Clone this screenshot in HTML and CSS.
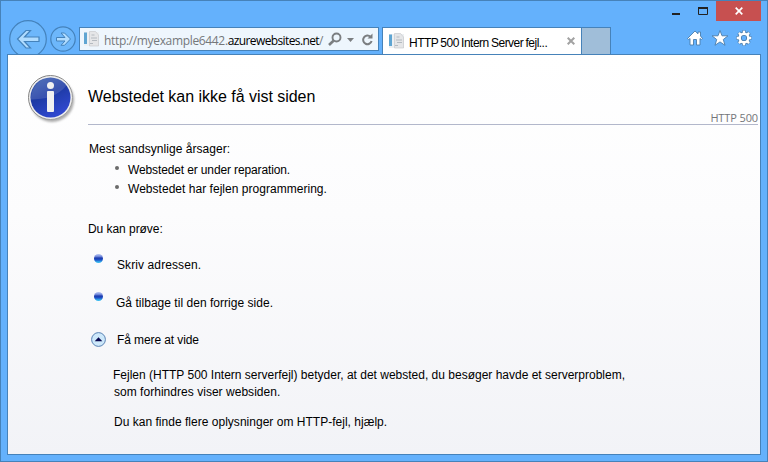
FILE: index.html
```
<!DOCTYPE html>
<html lang="da">
<head>
<meta charset="utf-8">
<title>HTTP 500 Intern Server fejl</title>
<link rel="stylesheet" href="styles.css">
</head>
<body>
<div class="window">
  <header class="chrome">
    <div class="nav">
      <svg width="38" height="34" viewBox="0 0 38 34"><circle cx="19" cy="19" r="18.3" fill="#6db7fb" stroke="#4482bb" stroke-width="1.2"/><path d="M8.500 19 17 10.500H21.500L15.500 17H30v4.500H15.500L21.500 28H17Z" fill="#b0dcff" stroke="#4482bb" stroke-width="1.2"/></svg>
      <svg class="forward" width="26" height="26" viewBox="0 0 26 26"><circle cx="13" cy="13" r="12.200" fill="#6db7fb" stroke="#4482bb" stroke-width="1.200"/><path d="M20.500 13 14.500 7H11L15 11.500H6.500v3.500H15L11 19.300h3.500Z" fill="#b0dcff" stroke="#4482bb"/></svg>
    </div>
    <div class="address">
      <svg class="page-icon" width="16" height="16" viewBox="0 0 16 16"><path d="M0 1h15v14H0Z" fill="#edf0f3"/><path d="M0 1.500h3v11.500H0Z" fill="#5fa5d2"/><path d="M5.500 .5h6l3 3.500v11h-9Z" fill="#e5e6e8" stroke="#c8cacd" stroke-width=".7"/><path d="M7.500 4h3M7 7h6M8 9.500h5M6 12.500h3" stroke="#b4bac0"/></svg>
      <span class="url">http://myexample6442.<b>azurewebsites.net</b>/</span>
      <svg class="tools" width="48" height="16" viewBox="0 0 48 16" fill="none" stroke="#7b7e81"><circle cx="8.500" cy="5.500" r="4" stroke-width="1.900"/><path d="m5.500 8.800-4.500 4.200" stroke-width="2.600"/><path d="M19 6h7l-3.500 4Z" fill="#7b7e81" stroke="none"/><path d="M42.500 4.800A4.300 4.300 0 1 0 43.600 9" stroke-width="2"/><path d="M44.500 1.500v5H39.500Z" fill="#7b7e81" stroke="none"/></svg>
    </div>
    <div class="tab">
      <svg class="page-icon" width="16" height="16" viewBox="0 0 16 16"><path d="M0 1h15v14H0Z" fill="#edf0f3"/><path d="M0 1.500h3v11.500H0Z" fill="#5fa5d2"/><path d="M5.500 .5h6l3 3.500v11h-9Z" fill="#e5e6e8" stroke="#c8cacd" stroke-width=".7"/><path d="M7.500 4h3M7 7h6M8 9.500h5M6 12.500h3" stroke="#b4bac0"/></svg>
      <span class="tab-title">HTTP 500 Intern Server fejl...</span>
      <svg class="tab-close" width="8" height="8" viewBox="0 0 8 8"><path d="m.7.7 6.600 6.600m0-6.600L.7 7.300" stroke="#a2a2a2" stroke-width="2"/></svg>
    </div>
    <div class="new-tab"></div>
    <div class="corner">
      <div class="controls">
        <svg width="44" height="20" viewBox="0 0 44 20"><path d="M0 12h8v2H0Z" fill="#222"/><path d="M26.500 6.500h9v7h-9Z" fill="none" stroke="#222"/><path d="M26 6h10v2H26Z" fill="#222"/></svg>
        <div class="close"><svg width="8" height="8" viewBox="0 0 8 8"><path d="m.7.7 6.600 6.600m0-6.600L.7 7.300" stroke="#fff" stroke-width="1.700"/></svg></div>
      </div>
      <div class="actions">
        <svg width="16" height="16" viewBox="0 0 16 16"><path d="M8 1 11 3.800V2h2.500v4L15.500 8.500 14.300 9.500 13 8.500V15H9.500V9.500h-3V15H3V8.500L1.700 9.500.5 8.500Z" fill="#fff" stroke="#4a7dac" stroke-width=".9"/></svg>
        <svg width="18" height="16" viewBox="0 0 18 16"><path d="m9 .5 2 5.300h6l-4.700 3.700 1.700 5.800-5-3.400-5 3.400 1.700-5.800L1 5.800h6Z" fill="#fff" stroke="#4a7dac" stroke-width=".9"/></svg>
        <svg width="16" height="16" viewBox="0 0 16 16"><g stroke="#4a7dac" stroke-width="4"><path d="M8 .5v3M8 12.500v3M.5 8h3M12.500 8h3M2.700 2.700l2.200 2.200M11.100 11.100l2.200 2.200M2.700 13.300l2.200-2.200M11.100 4.900l2.200-2.200"/></g><circle cx="8" cy="8" r="4.300" fill="none" stroke="#4a7dac" stroke-width="4"/><circle cx="8" cy="8" r="4.300" fill="none" stroke="#fff" stroke-width="2.400"/><path d="M8 .8v2.700M8 12.500v2.700M.8 8h2.700M12.500 8h2.700M2.900 2.900l2 2M11.100 11.100l2 2M2.900 13.100l2-2M11.100 4.900l2-2" stroke="#fff" stroke-width="2.400"/></svg>
      </div>
    </div>
  </header>
  <main class="page">
    <svg class="info" width="50" height="50" viewBox="0 0 50 50">
      <defs>
        <linearGradient id="ball" x1="0" y1="0" x2=".5" y2="1"><stop offset="0" stop-color="#3d62b0"/><stop offset=".5" stop-color="#1d3aa4"/><stop offset="1" stop-color="#3048ce"/></linearGradient>
        <linearGradient id="ring" x1="0" y1="0" x2="1" y2="1"><stop offset="0" stop-color="#777"/><stop offset="1" stop-color="#aaa"/></linearGradient>
        <filter id="shade" x="-20%" y="-20%" width="140%" height="140%"><feGaussianBlur stdDeviation="1.200"/></filter>
      </defs>
      <circle cx="24" cy="25" r="22" fill="#777" opacity=".6" filter="url(#shade)"/>
      <circle cx="22.500" cy="22.500" r="22" fill="#eee" stroke="url(#ring)"/>
      <circle cx="22.500" cy="22.500" r="20" fill="url(#ball)"/>
      <path d="M3 24.500C2.500 13 12 2.500 22.500 2.500c8 0 13 3 16 8C29.500 21.500 16.500 24.500 3 24.500Z" fill="#fff" opacity=".13"/>
      <circle cx="22.500" cy="10.500" r="3.500" fill="#f1f1f1"/><rect x="19" y="16" width="7" height="21" rx="1" fill="#f1f1f1"/>
    </svg>
    <section class="content">
      <div class="heading"><h1>Webstedet kan ikke få vist siden</h1></div>
      <div class="status">HTTP 500</div>
      <p class="causes-title">Mest sandsynlige årsager:</p>
      <ul class="causes">
        <li><span class="cause-repair">Webstedet er under reparation.</span></li>
        <li><span>Webstedet har fejlen programmering.</span></li>
      </ul>
      <p class="try-title">Du kan prøve:</p>
      <div class="step"><i class="ball"></i><span class="type-address">Skriv adressen.</span></div>
      <div class="step"><i class="ball"></i><span class="go-back">Gå tilbage til den forrige side.</span></div>
      <div class="more"><svg width="15" height="15" viewBox="0 0 15 15"><circle cx="7.500" cy="7.500" r="6.900" fill="#cde8fa" stroke="#5a82b4"/><path d="m3.700 9.300 3.800-4 3.800 4Z" fill="#08084f"/></svg><span>Få mere at vide</span></div>
      <div class="details">
        <p>Fejlen (HTTP 500 Intern serverfejl) betyder, at det websted, du besøger havde et serverproblem,<br><span class="continued">som forhindres viser websiden.</span></p>
        <p class="help">Du kan finde flere oplysninger om HTTP-fejl, hjælp.</p>
      </div>
    </section>
  </main>
</div>
</body>
</html>
```
FILE: styles.css
```
* { box-sizing: border-box; }
body { margin: 0; font-family: "Liberation Sans", Arial, sans-serif; font-size: 12px; color: #000; }
h1, p, ul { margin: 0; padding: 0; font-weight: 400; }
svg { display: block; flex: none; }
.window { width: 768px; height: 462px; background: #64b1fc; border: 1px solid #4682b9; display: flex; flex-direction: column; padding: 0 6px 6px; }
.chrome { height: 53px; display: flex; align-items: flex-end; overflow: hidden; }
.nav { display: flex; padding-left: 2px; width: 72px; }
.forward { margin: 6px 0 0 3px; }
.address { width: 300px; height: 24px; margin-bottom: 3px; border: 1px solid #4682b9; background: #eef6fd; display: flex; align-items: center; padding-left: 4px; }
.url { width: 224px; margin: 3px 0 0 4px; font: 12px/19px "Open Sans", sans-serif; letter-spacing: -.34px; color: #75787b; white-space: nowrap; }
.url b { font-weight: 400; color: #000; letter-spacing: -.61px; }
.tools { margin: 1px 0 0; }
.tab { width: 200px; height: 27px; margin-left: 3px; border: 1px solid #4682b9; border-bottom: 0; background: #fff; display: flex; align-items: center; padding-left: 6px; }
.tab-title { width: 154px; margin: 3px 0 0 4px; white-space: nowrap; letter-spacing: -.52px; word-spacing: -.5px; }
.tab-close { margin-left: 4px; }
.new-tab { width: 29px; height: 27px; border: 1px solid #4682b9; border-left: 0; border-bottom: 0; background: #a0bed9; }
.corner { flex: 1; height: 53px; }
.controls { display: flex; justify-content: flex-end; }
.close { width: 45px; height: 20px; background: #c75050; display: grid; place-items: center; }
.actions { display: flex; justify-content: flex-end; gap: 7.500px; padding: 9px 9px 0 0; }
.page { flex: 1; border: 1px solid #4682b9; background: linear-gradient(#fff, #fcfcfd 40%, #f2f3f7); display: flex; }
.info { margin: 20px 0 0 20px; }
.content { width: 670px; margin-left: 10px; }
.heading { height: 70px; border-bottom: 1px solid #b2b7cb; padding-top: 32px; }
h1 { font-size: 16px; line-height: 20px; letter-spacing: -.03px; }
.status { height: 12px; margin-top: -13px; text-align: right; font: 11px/12px "Open Sans", sans-serif; letter-spacing: -.12px; color: #74767a; }
.causes-title { margin-top: 17px; padding-left: 1px; line-height: 16px; letter-spacing: .04px; }
.causes { list-style: none; margin-top: 4px; }
.causes li { display: flex; line-height: 19px; letter-spacing: .03px; }
.causes li::before { content: ""; width: 4px; height: 4px; border-radius: 50%; background: #6b6b6b; margin: 5px 9px 0 27px; }
.causes .cause-repair { letter-spacing: -.13px; }
.try-title { margin-top: 22px; line-height: 16px; letter-spacing: -.05px; }
.step { display: flex; height: 38px; }
.try-title + .step { margin-top: 16px; }
.step span { margin-top: 4px; line-height: 16px; }
.step .type-address { letter-spacing: .1px; }
.step .go-back { margin-left: -1px; letter-spacing: .03px; }
.ball { width: 9px; height: 9px; margin: 1px 14px 0 6px; border-radius: 50%; background: linear-gradient(#b9c5f0, #7d93e0 25%, #1c3aad 45%, #1c50c8 65%, #38b8ee 90%); }
.more { display: flex; align-items: center; height: 16px; margin-top: 2px; gap: 11px; padding-left: 3px; letter-spacing: -.1px; }
.more span { padding-top: 2px; }
.details { margin: 20px 0 0 25px; line-height: 17px; white-space: nowrap; }
.details .continued { margin-left: 1px; letter-spacing: .03px; }
.details .help { margin: 13px 0 0 1px; letter-spacing: .02px; }
```
